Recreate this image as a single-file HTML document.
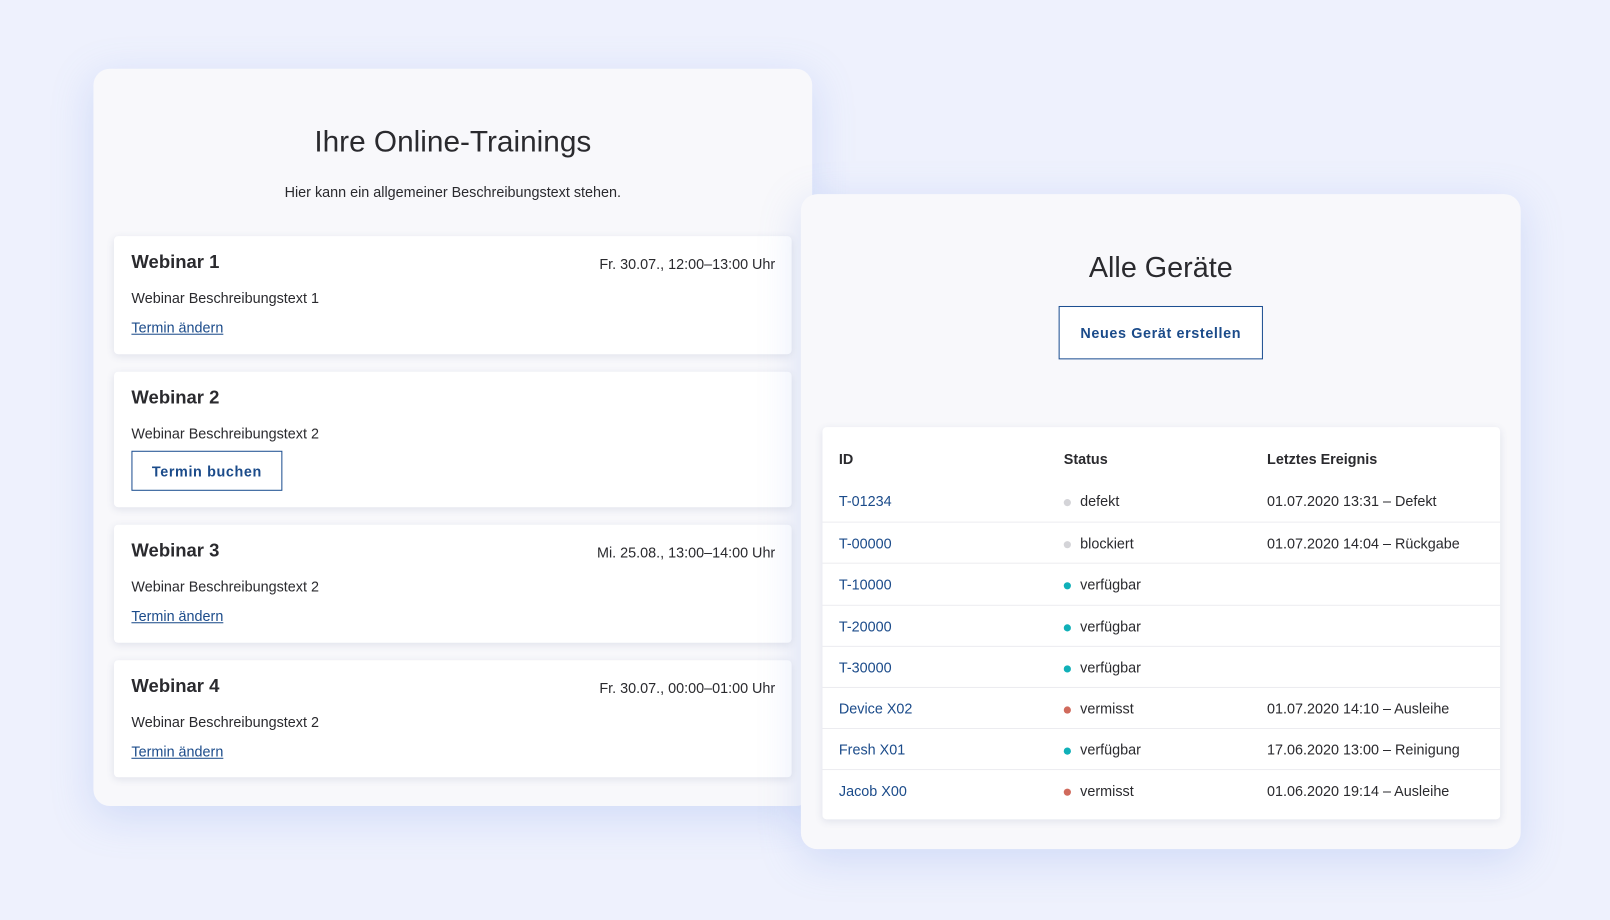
<!DOCTYPE html>
<html><head><meta charset="utf-8"><style>
html,body{margin:0;padding:0;width:1610px;height:920px;overflow:hidden;background:#eef1fd;}
#w{position:absolute;left:0;top:0;width:1568px;height:896px;transform:scale(1.02679);transform-origin:0 0;font-family:"Liberation Sans","Noto Sans CJK JP",sans-serif;color:#2a2a2e;}
.card{position:absolute;background:#f8f8fb;border-radius:16px;box-shadow:0 10px 40px rgba(120,150,230,.25);}
.w{position:absolute;left:20px;width:660px;background:#fff;border-radius:4px;box-shadow:0 2px 8px rgba(60,70,120,.12);}
.w h3{position:absolute;left:17px;top:15px;margin:0;font-size:18px;font-weight:600;}
.w .d{position:absolute;right:16px;top:19px;font-size:14px;}
.w .t{position:absolute;left:17px;top:52px;font-size:14px;}
.w a{position:absolute;left:17px;top:81px;font-size:14px;color:#1b4b8a;text-decoration:underline;}
.btn{position:absolute;border:1px solid #1d4f91;color:#1b4b8a;font-weight:bold;font-size:14px;letter-spacing:.6px;display:flex;align-items:center;justify-content:center;box-sizing:border-box;background:#fff;}
.row{position:absolute;left:0;width:660px;height:40px;border-top:1px solid #ececf0;font-size:14px;}
.row span{position:absolute;top:12px;}
.row .i{left:16px;color:#1b4b8a}
.row .s{left:251px}
.row .e{left:433px}
.dot{position:absolute;left:235px;top:18px;width:7px;height:7px;border-radius:50%;}
</style></head><body><div id="w">
<div class="card" style="left:91px;top:67px;width:700px;height:718px;">
<div style="position:absolute;left:0;width:700px;top:72px;text-align:center;font-size:29px;transform:translateY(-50%);">Ihre Online-Trainings</div>
<div style="position:absolute;left:0;width:700px;top:112px;text-align:center;font-size:14px;">Hier kann ein allgemeiner Beschreibungstext stehen.</div>
<div class="w" style="top:163px;height:115px;"><h3>Webinar 1</h3><div class="d">Fr. 30.07., 12:00–13:00 Uhr</div><div class="t">Webinar Beschreibungstext 1</div><a>Termin ändern</a></div>
<div class="w" style="top:295px;height:132px;"><h3>Webinar 2</h3><div class="t">Webinar Beschreibungstext 2</div><div class="btn" style="left:17px;top:77px;width:147px;height:39px;">Termin buchen</div></div>
<div class="w" style="top:444px;height:115px;"><h3>Webinar 3</h3><div class="d">Mi. 25.08., 13:00–14:00 Uhr</div><div class="t">Webinar Beschreibungstext 2</div><a>Termin ändern</a></div>
<div class="w" style="top:576px;height:114px;"><h3>Webinar 4</h3><div class="d">Fr. 30.07., 00:00–01:00 Uhr</div><div class="t">Webinar Beschreibungstext 2</div><a>Termin ändern</a></div>
</div>
<div class="card" style="left:780px;top:189px;width:701px;height:638px;">
<div style="position:absolute;left:0;width:701px;top:56px;text-align:center;font-size:28px;">Alle Geräte</div>
<div class="btn" style="left:251px;top:109px;width:199px;height:52px;border-width:1.5px;">Neues Gerät erstellen</div>
<div style="position:absolute;left:21px;top:227px;width:660px;height:382px;background:#fff;border-radius:4px;box-shadow:0 2px 8px rgba(60,70,120,.12);">
<div style="position:absolute;top:23px;left:16px;font-size:14px;font-weight:600;">ID</div>
<div style="position:absolute;top:23px;left:235px;font-size:14px;font-weight:600;">Status</div>
<div style="position:absolute;top:23px;left:433px;font-size:14px;font-weight:600;">Letztes Ereignis</div>
<div class="row" style="top:52px;border-top:none"><span class="i">T-01234</span><i class="dot" style="background:#d4d4d8"></i><span class="s">defekt</span><span class="e">01.07.2020 13:31 – Defekt</span></div>
<div class="row" style="top:92px"><span class="i">T-00000</span><i class="dot" style="background:#d4d4d8"></i><span class="s">blockiert</span><span class="e">01.07.2020 14:04 – Rückgabe</span></div>
<div class="row" style="top:132px"><span class="i">T-10000</span><i class="dot" style="background:#10b0b8"></i><span class="s">verfügbar</span></div>
<div class="row" style="top:173px"><span class="i">T-20000</span><i class="dot" style="background:#10b0b8"></i><span class="s">verfügbar</span></div>
<div class="row" style="top:213px"><span class="i">T-30000</span><i class="dot" style="background:#10b0b8"></i><span class="s">verfügbar</span></div>
<div class="row" style="top:253px"><span class="i">Device X02</span><i class="dot" style="background:#d06a5c"></i><span class="s">vermisst</span><span class="e">01.07.2020 14:10 – Ausleihe</span></div>
<div class="row" style="top:293px"><span class="i">Fresh X01</span><i class="dot" style="background:#10b0b8"></i><span class="s">verfügbar</span><span class="e">17.06.2020 13:00 – Reinigung</span></div>
<div class="row" style="top:333px"><span class="i">Jacob X00</span><i class="dot" style="background:#d06a5c"></i><span class="s">vermisst</span><span class="e">01.06.2020 19:14 – Ausleihe</span></div>
</div>
</div>
</div></body></html>
